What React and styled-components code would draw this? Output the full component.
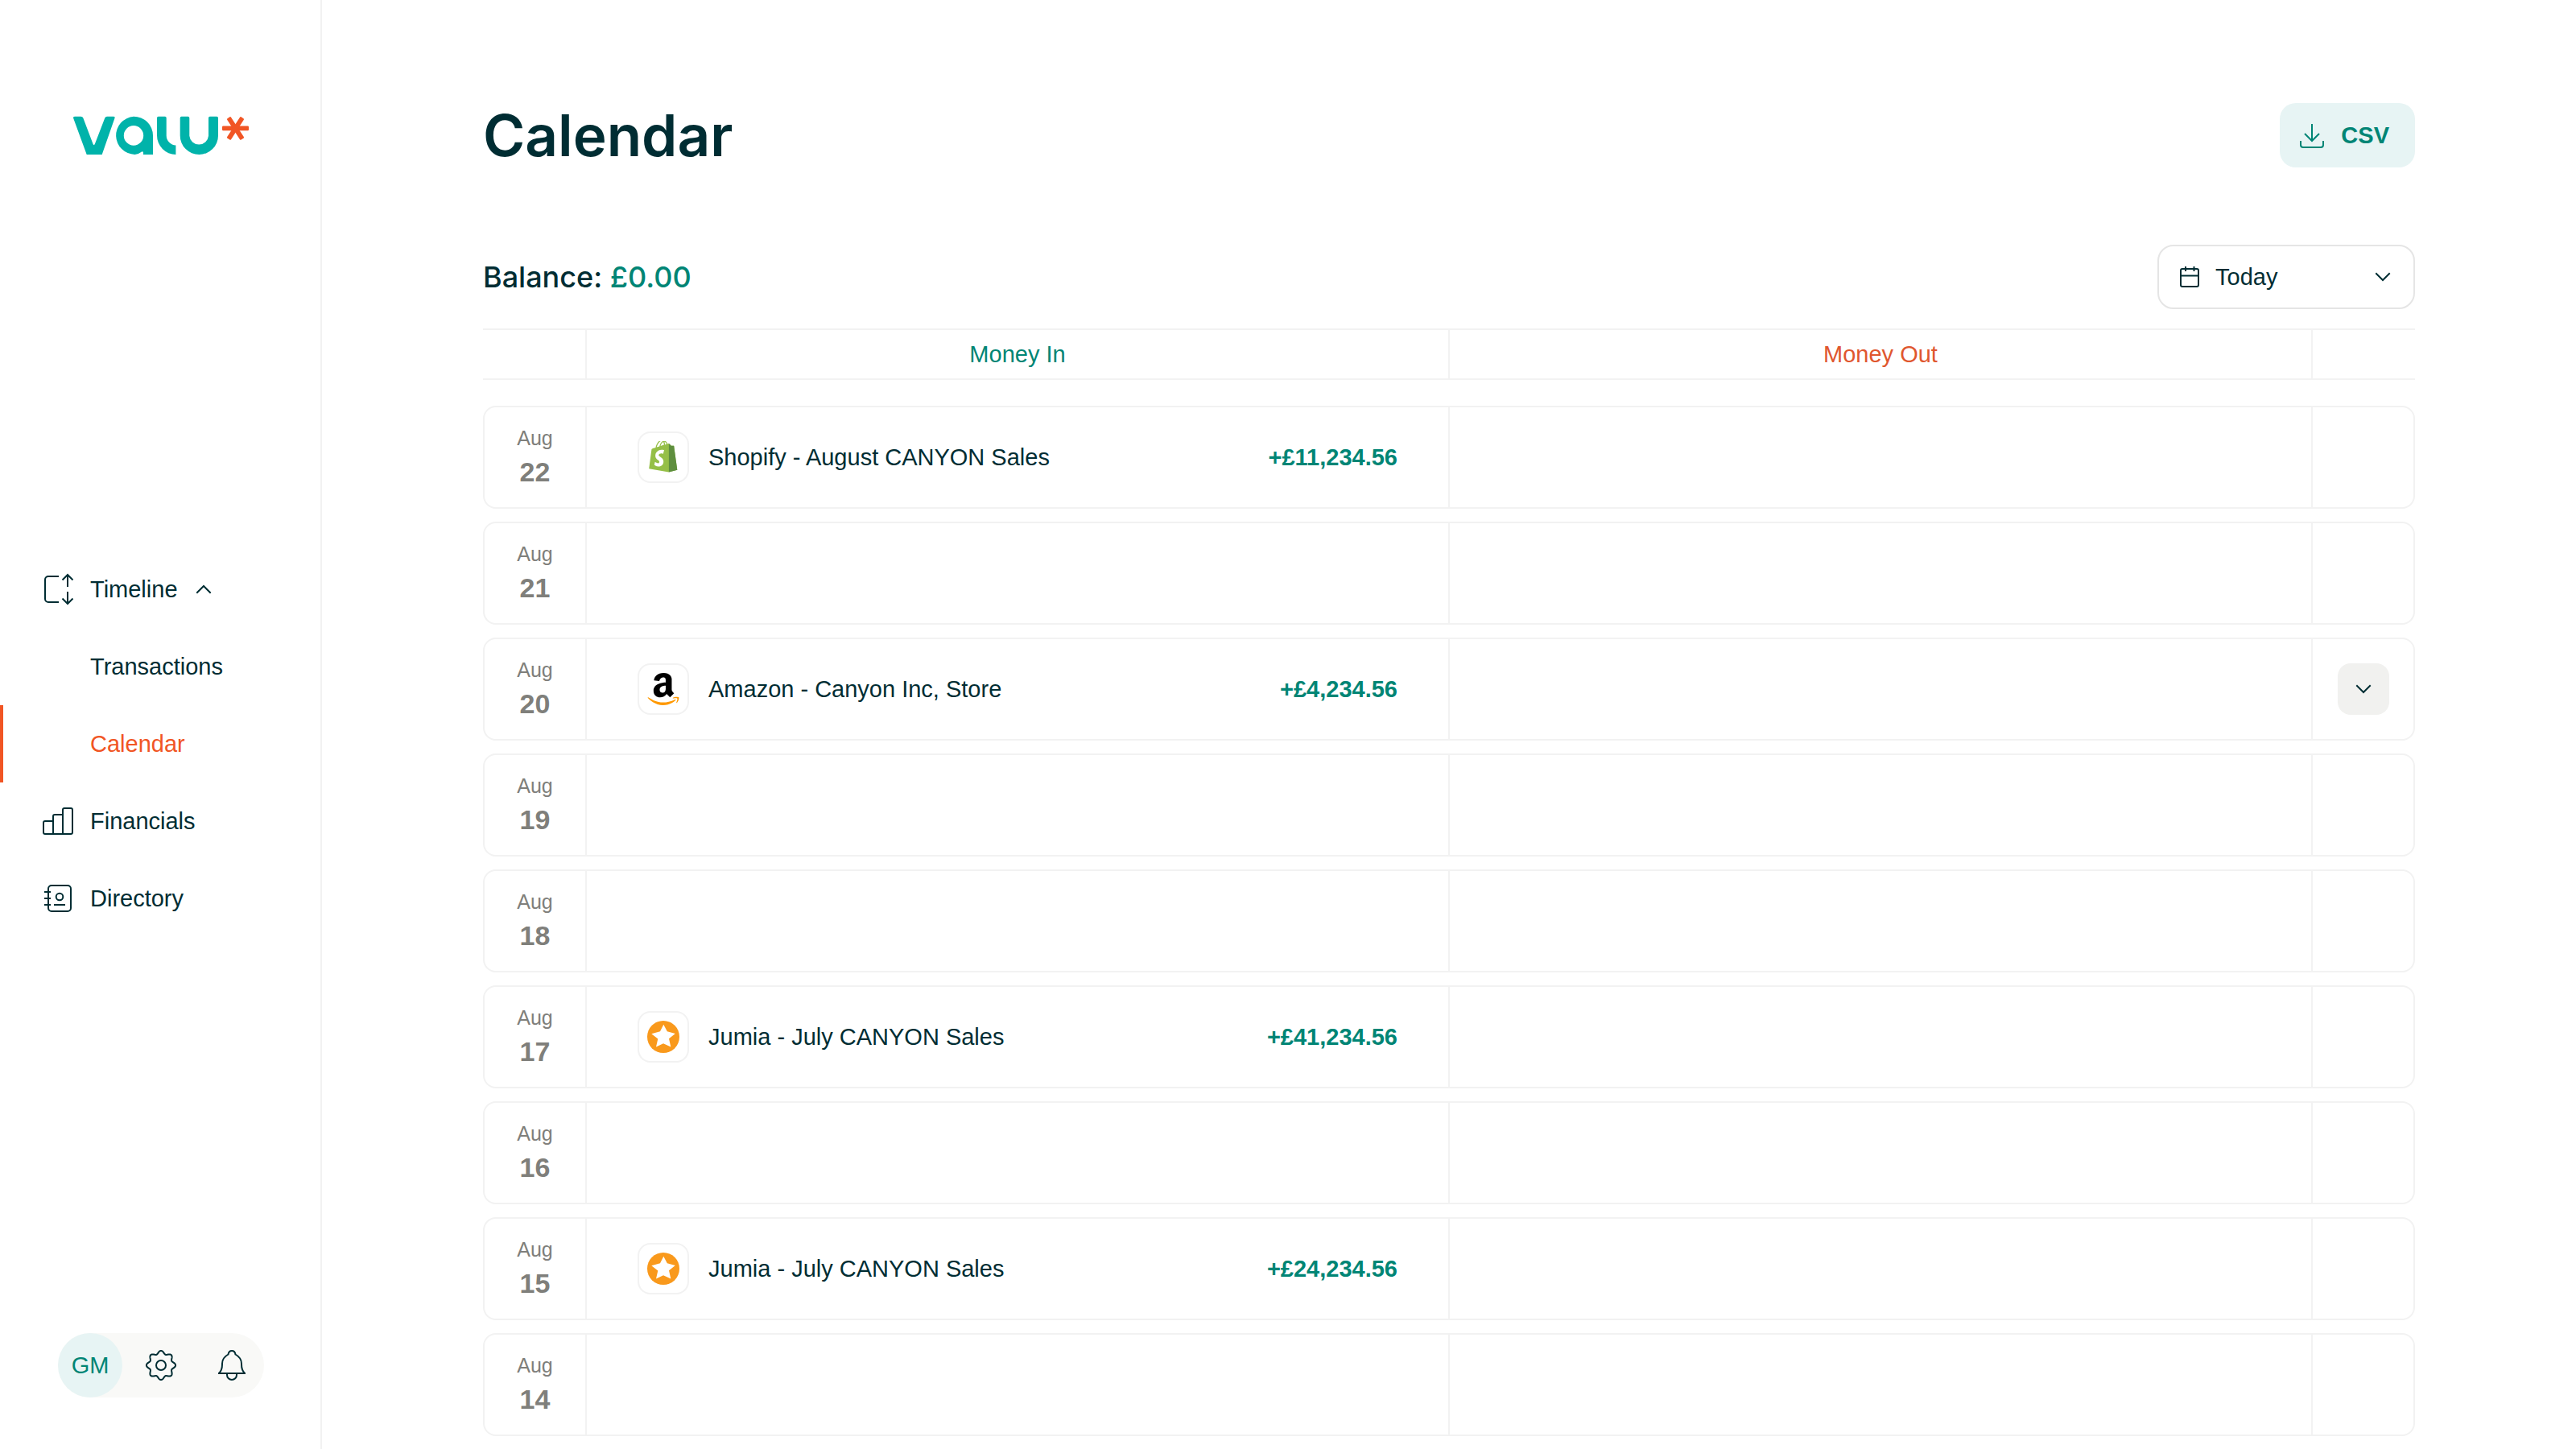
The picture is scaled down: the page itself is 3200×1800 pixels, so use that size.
import React from "react";
import styled, { createGlobalStyle } from "styled-components";

const ink = "#002d33";
const green = "#008575";
const orange = "#f15524";
const line = "#f2f2f2";
const mint = "#e7f4f4";
const headingFont = 'Inter, "Liberation Sans", Arial, sans-serif';
const bodyFont = '"Liberation Sans", Arial, sans-serif';

const GlobalStyle = createGlobalStyle`
  *, *::before, *::after { box-sizing: border-box; }
  body {
    margin: 0;
    background: #fff;
    color: ${ink};
    font-family: ${bodyFont};
    font-size: 29px;
    line-height: 40px;
  }
  button, select { font: inherit; color: inherit; }
`;

const Page = styled.div`
  display: flex;
  align-items: flex-start;
  min-height: 100vh;
`;

const Sidebar = styled.aside`
  position: sticky;
  top: 0;
  flex: none;
  display: flex;
  flex-direction: column;
  align-items: center;
  width: 400px;
  height: 100vh;
  padding: 144px 0 64px;
  box-shadow: inset -2px 0 ${line};
`;

const Logo = styled.svg`
  flex: none;
  width: 220px;
  height: 48px;
`;

const Nav = styled.nav`
  flex: 1;
  display: flex;
  flex-direction: column;
  justify-content: center;
  align-self: stretch;
`;

const NavItem = styled.a`
  display: flex;
  align-items: center;
  gap: 20px;
  height: 96px;
  padding-left: ${(p) => (p.$nested ? 108 : 48)}px;
  border-left: 4px solid ${(p) => (p.$active ? orange : "transparent")};
  color: ${(p) => (p.$active ? orange : ink)};
  text-decoration: none;
`;

const NavLabel = styled.span`
  display: flex;
  align-items: center;
  gap: 16px;
`;

const Icon = styled.svg`
  flex: none;
  width: ${(p) => p.$size}px;
  height: ${(p) => p.$size}px;
  fill: none;
  stroke: currentColor;
  stroke-width: 2;
  pointer-events: none;
`;

const Account = styled.div`
  display: flex;
  align-items: center;
  gap: 8px;
  width: 256px;
  height: 80px;
  border-radius: 40px;
  background: #f9f9f7;
`;

const AccountButton = styled.button`
  flex: none;
  display: flex;
  align-items: center;
  justify-content: center;
  width: 80px;
  height: 80px;
  padding: 0;
  border: 0;
  border-radius: 50%;
  background: none;
`;

const Avatar = styled(AccountButton)`
  background: ${mint};
  color: ${green};
`;

const Main = styled.main`
  flex: 1;
  min-width: 0;
  padding: 128px 200px 16px;
`;

const Bar = styled.header`
  display: flex;
  align-items: center;
  justify-content: space-between;
  height: 80px;
  margin-bottom: ${(p) => p.$gap}px;
`;

const Title = styled.h1`
  margin: 0;
  font-family: ${headingFont};
  font-size: 71px;
  line-height: 80px;
  font-weight: 600;
`;

const ExportButton = styled.button`
  display: flex;
  align-items: center;
  gap: 20px;
  height: 80px;
  padding: 0 32px 0 24px;
  border: 0;
  border-radius: 20px;
  background: ${mint};
  color: ${green};
  font-weight: 700;
`;

const Balance = styled.p`
  margin: 0;
  font-family: ${headingFont};
  font-size: 36px;
  font-weight: 500;
`;

const BalanceAmount = styled.span`
  color: ${green};
`;

const PeriodField = styled.label`
  display: flex;
  align-items: center;
  gap: 16px;
  width: 320px;
  height: 80px;
  padding: 0 22px;
  border: 2px solid #e5e5e5;
  border-radius: 20px;
`;

const PeriodSelect = styled.select`
  flex: 1;
  min-width: 0;
  height: 76px;
  padding: 0;
  border: 0;
  outline: 0;
  appearance: none;
  background: none;
`;

const Table = styled.table`
  display: block;
`;

const TableHead = styled.thead`
  display: block;
  margin-bottom: 32px;
`;

const TableBody = styled.tbody`
  display: grid;
  gap: 16px;
`;

const Row = styled.tr`
  display: grid;
  grid-template-columns: 127px 1fr 1fr 125px;
  height: 128px;
  border: 2px solid ${line};
  border-radius: 16px;
`;

const HeadRow = styled(Row)`
  height: 64px;
  border-width: 2px 0;
  border-radius: 0;
  grid-template-columns: 129px 1fr 1fr 127px;
`;

const HeadCell = styled.th`
  display: flex;
  align-items: center;
  justify-content: center;
  padding: 0;
  border-right: 2px solid ${line};
  color: ${(p) => p.$color};
  font-weight: 400;
  &:last-child { border-right: 0; }
`;

const DateCell = styled.th`
  display: flex;
  flex-direction: column;
  align-items: center;
  justify-content: center;
  gap: 4px;
  padding: 0;
  border-right: 2px solid ${line};
  color: #7f7f7b;
`;

const Month = styled.span`
  font-size: 25px;
  line-height: 32px;
  font-weight: 400;
`;

const Day = styled.span`
  font-size: 34px;
  line-height: 44px;
  font-weight: 700;
`;

const EntryCell = styled.td`
  display: flex;
  align-items: center;
  gap: 24px;
  padding: 0 63px;
  border-right: 2px solid ${line};
`;

const ActionCell = styled.td`
  display: flex;
  align-items: center;
  padding: 0 30px 0 31px;
`;

const VendorBadge = styled.span`
  flex: none;
  display: flex;
  align-items: center;
  justify-content: center;
  width: 64px;
  height: 64px;
  border: 2px solid ${line};
  border-radius: 16px;
`;

const VendorLogo = styled.svg`
  width: 40px;
  height: 40px;
`;

const VendorName = styled.span`
  flex: 1;
`;

const Amount = styled.span`
  color: ${green};
  font-weight: 700;
`;

const ExpandButton = styled.button`
  display: flex;
  align-items: center;
  justify-content: center;
  width: 64px;
  height: 64px;
  padding: 0;
  border: 0;
  border-radius: 16px;
  background: #f1f1ef;
`;

function Chevron({ up }) {
  return (
    <Icon $size={32} viewBox="0 0 32 32" aria-hidden="true">
      <path d={up ? "M8 20l8-8 8 8" : "M8 12l8 8 8-8"} strokeLinecap="square" />
    </Icon>
  );
}

const gearOutline =
  "M" +
  Array.from({ length: 160 }, (_, i) => {
    const angle = (i / 160) * Math.PI * 2;
    const radius = 16.2 + 1.9 * Math.cos(8 * angle);
    return `${(20 + radius * Math.cos(angle)).toFixed(2)} ${(20 + radius * Math.sin(angle)).toFixed(2)}`;
  }).join("L") +
  "Z";

function ShopifyLogo() {
  return (
    <VendorLogo viewBox="0 5 110 124" aria-hidden="true">
      <path
        fill="#95bf47"
        d="M95.9 23.9c-.1-.6-.6-1-1.1-1-.5 0-9.3-.2-9.3-.2s-7.4-7.2-8.1-7.9c-.7-.7-2.2-.5-2.7-.3 0 0-1.4.4-3.7 1.1-.4-1.3-1-2.8-1.8-4.4-2.6-5-6.5-7.7-11.1-7.7-.3 0-.6 0-1 .1-.1-.2-.3-.3-.4-.5-2-2.2-4.6-3.2-7.7-3.1-6 .2-12 4.5-16.8 12.2-3.4 5.4-6 12.2-6.7 17.5-6.9 2.1-11.7 3.6-11.8 3.7-3.5 1.1-3.6 1.2-4 4.5-.3 2.5-9.5 73.1-9.5 73.1l75.6 13.1 32.8-8.1S96 24.5 95.9 23.9zM67.2 16.8c-1.8.5-3.8 1.2-5.9 1.8 0-3-.4-7.3-1.8-10.9 4.6.8 6.8 6 7.7 9.1zM57.2 19.9c-4 1.2-8.4 2.6-12.8 3.9 1.2-4.7 3.6-9.4 6.4-12.5 1.1-1.1 2.6-2.4 4.3-3.2 1.8 3.5 2.2 8.4 2.1 11.8zM49.1 4c1.4 0 2.6.3 3.6.9-1.6.9-3.2 2.1-4.7 3.7-3.8 4.1-6.7 10.5-7.9 16.6-3.6 1.1-7.2 2.2-10.5 3.2C31.7 18.8 39.8 4.3 49.1 4z"
      />
      <path
        fill="#5e8e3e"
        d="M94.8 22.9c-.5 0-9.3-.2-9.3-.2s-7.4-7.2-8.1-7.9c-.3-.3-.6-.4-1-.5V124l32.8-8.1S96 24.5 95.9 23.9c-.1-.6-.6-1-1.1-1z"
      />
      <path
        fill="#fff"
        d="M58 39.9l-3.8 14.4s-4.3-2-9.4-1.6c-7.5.5-7.5 5.2-7.5 6.4.4 6.4 17.3 7.8 18.3 22.9.7 11.9-6.3 20-16.4 20.6-12.2.8-18.9-6.4-18.9-6.4l2.6-11s6.7 5.1 12.1 4.7c3.5-.2 4.8-3.1 4.7-5.1-.5-8.4-14.3-7.9-15.2-21.7-.7-11.6 6.9-23.4 23.7-24.4 6.5-.5 9.8 1.2 9.8 1.2z"
      />
    </VendorLogo>
  );
}

function AmazonLogo() {
  return (
    <VendorLogo viewBox="0 32 448 448" aria-hidden="true">
      <path d="M257.2 162.7c-48.7 1.8-169.5 15.5-169.5 117.5 0 109.5 138.3 114 183.5 43.2 6.5 10.2 35.4 37.5 45.3 46.8l56.8-56S341 288.9 341 261.4V114.3C341 89 316.5 32 228.7 32 140.7 32 94 87 94 136.3l73.5 6.8c16.3-49.5 54.2-49.5 54.2-49.5 40.7-.1 35.5 29.8 35.5 69.1zm0 86.8c0 80-84.2 68-84.2 17.2 0-47.2 50.5-56.7 84.2-57.8v40.6z" />
      <path
        fill="#ff9900"
        d="M393.2 413c-7.7 10-70 67-174.5 67S34.2 408.5 9.7 379c-6.8-7.7 1-11.3 5.5-8.3C88.5 415.2 203 488.5 387.7 401c7.5-3.7 13.3 2 5.5 12zm39.8 2.2c-6.5 15.8-16 26.8-21.2 31-5.5 4.5-9.5 2.7-6.5-3.8s19.3-46.5 12.7-55c-6.5-8.3-37-4.3-48-3.2-10.8 1-13 2-14-.3-2.3-5.7 21.7-15.5 37.5-17.5 15.7-1.8 41-.8 46 5.7 3.7 5.1 0 27.1-6.5 43.1z"
      />
    </VendorLogo>
  );
}

function JumiaLogo() {
  return (
    <VendorLogo viewBox="0 0 40 40" aria-hidden="true">
      <circle cx="20" cy="20" r="20" fill="#f9991c" />
      <path
        fill="#fff"
        d="M20.3 4.7L24.8 13.2L34.8 16L27 22.3L29.3 32.5L20 28.3L11 32.5L13.3 22.6L5.3 16.2L16 13.2Z"
      />
    </VendorLogo>
  );
}

const logos = { shopify: ShopifyLogo, amazon: AmazonLogo, jumia: JumiaLogo };

const days = [
  { day: 22, vendor: "shopify", name: "Shopify - August CANYON Sales", amount: "+£11,234.56" },
  { day: 21 },
  { day: 20, vendor: "amazon", name: "Amazon - Canyon Inc, Store", amount: "+£4,234.56", expandable: true },
  { day: 19 },
  { day: 18 },
  { day: 17, vendor: "jumia", name: "Jumia - July CANYON Sales", amount: "+£41,234.56" },
  { day: 16 },
  { day: 15, vendor: "jumia", name: "Jumia - July CANYON Sales", amount: "+£24,234.56" },
  { day: 14 },
];

function DayRow({ entry }) {
  const BrandLogo = logos[entry.vendor];
  return (
    <Row>
      <DateCell scope="row">
        <Month>Aug</Month>
        <Day>{entry.day}</Day>
      </DateCell>
      <EntryCell>
        {BrandLogo && (
          <>
            <VendorBadge>
              <BrandLogo />
            </VendorBadge>
            <VendorName>{entry.name}</VendorName>
            <Amount>{entry.amount}</Amount>
          </>
        )}
      </EntryCell>
      <EntryCell />
      <ActionCell>
        {entry.expandable && (
          <ExpandButton type="button" aria-label="Show more">
            <Chevron />
          </ExpandButton>
        )}
      </ActionCell>
    </Row>
  );
}

function SideNav() {
  return (
    <Sidebar>
      <Logo viewBox="0 0 220 48" role="img" aria-label="valu">
        <g fill="#00b3aa" fillRule="evenodd">
          <path d="M3 .7H10.5Q12.6 .7 13.3 2.6L25.5 34.8Q26.7 37.5 27.9 34.8L40.3 2.6Q41 .7 43 .7H51Q53.3 .7 52.4 3L36.7 48H17.7L1.2 3Q.5 .7 3 .7Z" />
          <path d="M76 .7A24 23.7 0 0 1 100 24.3V48H88V45.5Q87.5 43.6 86 44.6Q82.5 47.5 77.5 48A24 23.7 0 0 1 76 .7ZM76 12.1A12.2 12.3 0 1 0 76 36.7A12.2 12.3 0 1 0 76 12.1Z" />
          <path d="M106.7 .7H115Q116.7 .7 116.7 2.4V24.3A12 12.2 0 0 0 128.4 36.5V48A23.5 23.7 0 0 1 105 24.3V2.4Q105 .7 106.7 .7Z" />
          <path d="M135.4 .7H143.6Q145.3 .7 145.3 2.4V24.8A11.9 11.9 0 0 0 169 24.8V2.4Q169 .7 170.7 .7H179.3Q181 .7 181 2.4V24.5A23.65 23.5 0 0 1 133.7 24.5V2.4Q133.7 .7 135.4 .7Z" />
        </g>
        <g fill="#f15524">
          <rect x="186" y="12.5" width="33" height="5.8" rx="1.2" />
          <rect x="186.8" y="12.5" width="31.4" height="5.8" rx="1.2" transform="rotate(57 202.5 15.4)" />
          <rect x="186.8" y="12.5" width="31.4" height="5.8" rx="1.2" transform="rotate(-57 202.5 15.4)" />
        </g>
      </Logo>
      <Nav>
        <NavItem href="#timeline">
          <Icon $size={40} viewBox="0 0 40 40" aria-hidden="true">
            <path d="M21 4H8a4 4 0 0 0-4 4v24a4 4 0 0 0 4 4h13M32 2v15M25.500 8.500l6.500-6.500 6.500 6.500M32 23v15M25.500 31.500l6.500 6.500 6.500-6.500" />
          </Icon>
          <NavLabel>
            Timeline
            <Chevron up />
          </NavLabel>
        </NavItem>
        <NavItem href="#transactions" $nested>Transactions</NavItem>
        <NavItem href="#calendar" $nested $active aria-current="page">Calendar</NavItem>
        <NavItem href="#financials">
          <Icon $size={40} viewBox="0 0 40 40" aria-hidden="true">
            <path d="M14 36H4a2 2 0 0 1-2-2V22a2 2 0 0 1 2-2h10M26 36H14V14a2 2 0 0 1 2-2h10M26 36V6a2 2 0 0 1 2-2h8a2 2 0 0 1 2 2v28a2 2 0 0 1-2 2z" />
          </Icon>
          Financials
        </NavItem>
        <NavItem href="#directory">
          <Icon $size={40} viewBox="0 0 40 40" aria-hidden="true">
            <rect x="8" y="4" width="28" height="32" rx="4" />
            <circle cx="22" cy="18" r="4.300" />
            <path d="M3 12h8M3 20h8M3 28h8M15 28h14" />
          </Icon>
          Directory
        </NavItem>
      </Nav>
      <Account>
        <Avatar type="button">GM</Avatar>
        <AccountButton type="button" aria-label="Settings">
          <Icon $size={40} viewBox="0 0 40 40" aria-hidden="true">
            <path d={gearOutline} />
            <circle cx="20" cy="20" r="6" />
          </Icon>
        </AccountButton>
        <AccountButton type="button" aria-label="Notifications">
          <Icon $size={40} viewBox="0 0 40 40" aria-hidden="true">
            <path d="M4 30C7 27 8 24 8 19v-1C8 12 11 9 15.500 6.500C16 3.500 17.800 2 20 2s4 1.500 4.500 4.500C29 9 32 12 32 18v1c0 5 1 8 4 11M3 30h34M14 30v2a6 6 0 0 0 12 0v-2" />
          </Icon>
        </AccountButton>
      </Account>
    </Sidebar>
  );
}

export default function App() {
  return (
    <>
      <GlobalStyle />
      <Page>
        <SideNav />
        <Main>
          <Bar $gap={96}>
            <Title>Calendar</Title>
            <ExportButton type="button">
              <Icon $size={32} viewBox="0 0 32 32" aria-hidden="true">
                <path d="M16 2v21M7 14l9 9 9-9M2 23v5a3 3 0 0 0 3 3h22a3 3 0 0 0 3-3v-5" />
              </Icon>
              CSV
            </ExportButton>
          </Bar>
          <Bar as="div" $gap={24}>
            <Balance>
              Balance: <BalanceAmount>£0.00</BalanceAmount>
            </Balance>
            <PeriodField>
              <Icon $size={32} viewBox="0 0 32 32" aria-hidden="true">
                <path d="M7 6h18a2 2 0 0 1 2 2v18a2 2 0 0 1-2 2H7a2 2 0 0 1-2-2V8a2 2 0 0 1 2-2zM5 14.500h22M11 3v6M21.500 3v6" />
              </Icon>
              <PeriodSelect aria-label="Period" defaultValue="today">
                <option value="today">Today</option>
              </PeriodSelect>
              <Chevron />
            </PeriodField>
          </Bar>
          <Table>
            <TableHead>
              <HeadRow>
                <HeadCell />
                <HeadCell scope="col" $color={green}>Money In</HeadCell>
                <HeadCell scope="col" $color="#e0572f">Money Out</HeadCell>
                <HeadCell />
              </HeadRow>
            </TableHead>
            <TableBody>
              {days.map((entry) => (
                <DayRow key={entry.day} entry={entry} />
              ))}
            </TableBody>
          </Table>
        </Main>
      </Page>
    </>
  );
}
